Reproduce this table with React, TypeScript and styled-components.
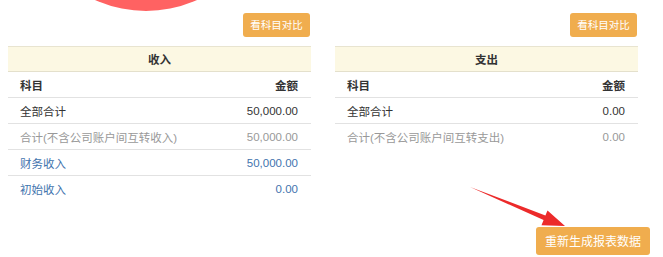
import styled, { createGlobalStyle } from "styled-components";

const GlobalStyle = createGlobalStyle`
  html, body {
    margin: 0;
    padding: 0;
    background: #fff;
  }
  body {
    font-family: "Liberation Sans", "Noto Sans CJK SC", sans-serif;
    color: #333;
  }
`;

const Page = styled.div`
  position: relative;
  width: 663px;
  height: 257px;
  overflow: hidden;
  box-sizing: border-box;
  padding: 13px 0 0 8px;
`;

const Blob = styled.div`
  position: absolute;
  left: 22px;
  top: -237px;
  width: 248px;
  height: 248px;
  border-radius: 50%;
  background: #ff6262;
`;

const Columns = styled.div`
  display: flex;
  gap: 24px;
`;

const Column = styled.div`
  width: 303px;
  display: flex;
  flex-direction: column;
`;

const ButtonRow = styled.div`
  display: flex;
  justify-content: flex-end;
  padding-right: 1px;
`;

const WarnButton = styled.button<{ $big?: boolean }>`
  border: none;
  border-radius: 3px;
  background: #f0ad4e;
  color: #fff;
  font-family: "Noto Sans CJK SC", sans-serif;
  font-size: ${(p) => (p.$big ? "12px" : "10.5px")};
  height: ${(p) => (p.$big ? "28px" : "24px")};
  width: ${(p) => (p.$big ? "114px" : "67px")};
  padding: 0;
  line-height: 1;
`;

const Table = styled.div`
  margin-top: 9px;
  display: flex;
  flex-direction: column;
  border-top: 1px solid #e8e4d0;
`;

const Caption = styled.div`
  height: 24px;
  display: flex;
  align-items: center;
  justify-content: center;
  background: #fcf8e3;
  border-bottom: 1px solid #e4e0cc;
  font-family: "Noto Sans CJK SC", sans-serif;
  font-size: 11.5px;
  font-weight: 700;
  color: #333;
`;

const Row = styled.div<{ $last?: boolean }>`
  height: 25px;
  display: flex;
  align-items: center;
  justify-content: space-between;
  padding: 0 13px 0 12px;
  border-bottom: 1px solid ${(p) => (p.$last ? "transparent" : "#e2e2e2")};
`;

const tones = {
  head: "#333",
  main: "#333",
  muted: "#999",
  link: "#3f74ae",
};

type Tone = keyof typeof tones;

const Label = styled.span<{ $tone: Tone }>`
  font-family: "Liberation Sans", "Noto Sans CJK SC", sans-serif;
  font-size: 11.5px;
  font-weight: ${(p) => (p.$tone === "head" ? 700 : 400)};
  color: ${(p) => tones[p.$tone]};
`;

const Footer = styled.div`
  display: flex;
  justify-content: flex-end;
  padding-right: 13px;
  margin-top: 25px;
`;

const Arrow = styled.svg`
  position: absolute;
  left: 0;
  top: 0;
  pointer-events: none;
`;

type Line = { name: string; value: string; tone: Tone };

const income: Line[] = [
  { name: "全部合计", value: "50,000.00", tone: "main" },
  { name: "合计(不含公司账户间互转收入)", value: "50,000.00", tone: "muted" },
  { name: "财务收入", value: "50,000.00", tone: "link" },
  { name: "初始收入", value: "0.00", tone: "link" },
];

const expense: Line[] = [
  { name: "全部合计", value: "0.00", tone: "main" },
  { name: "合计(不含公司账户间互转支出)", value: "0.00", tone: "muted" },
];

function Ledger({ title, lines }: { title: string; lines: Line[] }) {
  return (
    <Column>
      <ButtonRow>
        <WarnButton>看科目对比</WarnButton>
      </ButtonRow>
      <Table>
        <Caption>{title}</Caption>
        <Row>
          <Label $tone="head">科目</Label>
          <Label $tone="head">金额</Label>
        </Row>
        {lines.map((l, i) => (
          <Row key={l.name} $last={i === lines.length - 1}>
            <Label $tone={l.tone}>{l.name}</Label>
            <Label $tone={l.tone}>{l.value}</Label>
          </Row>
        ))}
      </Table>
    </Column>
  );
}

export default function App() {
  return (
    <>
      <GlobalStyle />
      <Page>
        <Blob />
        <Columns>
          <Ledger title="收入" lines={income} />
          <Ledger title="支出" lines={expense} />
        </Columns>
        <Footer>
          <WarnButton $big>重新生成报表数据</WarnButton>
        </Footer>
        <Arrow width="663" height="257" viewBox="0 0 663 257">
          <polygon
            points="470,187 545.4,215.5 547.5,210.4 565,226 541.5,225.2 543.6,220.1"
            fill="#ec2a2a"
          />
        </Arrow>
      </Page>
    </>
  );
}
